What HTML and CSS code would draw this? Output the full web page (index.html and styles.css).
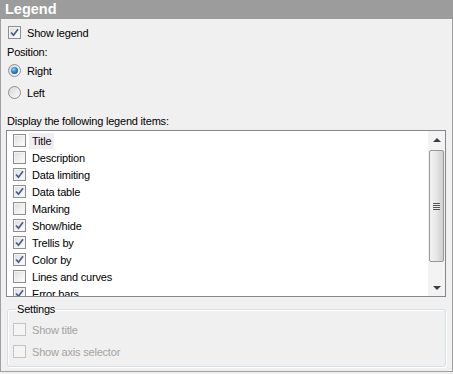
FILE: index.html
```html
<!DOCTYPE html>
<html lang="en">
  <head>
    <meta charset="UTF-8" />
    <title>Legend</title>
    <link rel="stylesheet" href="styles.css">
  </head>
  <body>
    <div class="panel">
      <div class="panel-header">Legend</div>
      <div class="panel-body">
        <label class="check-row first">
          <span class="box checked"><svg viewBox="0 0 11 11"><path d="M2 5.5 L4.5 8.2 L9 2.2" /></svg></span>
          Show legend
        </label>
        <div class="caption position">Position:</div>
        <label class="radio-row right">
          <span class="radio on"></span>
          Right
        </label>
        <label class="radio-row left">
          <span class="radio"></span>
          Left
        </label>
        <div class="caption items-caption">Display the following legend items:</div>

        <div class="listbox">
          <ul class="items">
            <li><span class="box"></span><span class="focus">Title</span></li>
            <li><span class="box"></span>Description</li>
            <li><span class="box checked"><svg viewBox="0 0 11 11"><path d="M2 5.5 L4.5 8.2 L9 2.2" /></svg></span>Data limiting</li>
            <li><span class="box checked"><svg viewBox="0 0 11 11"><path d="M2 5.5 L4.5 8.2 L9 2.2" /></svg></span>Data table</li>
            <li><span class="box"></span>Marking</li>
            <li><span class="box checked"><svg viewBox="0 0 11 11"><path d="M2 5.5 L4.5 8.2 L9 2.2" /></svg></span>Show/hide</li>
            <li><span class="box checked"><svg viewBox="0 0 11 11"><path d="M2 5.5 L4.5 8.2 L9 2.2" /></svg></span>Trellis by</li>
            <li><span class="box checked"><svg viewBox="0 0 11 11"><path d="M2 5.5 L4.5 8.2 L9 2.2" /></svg></span>Color by</li>
            <li><span class="box"></span>Lines and curves</li>
            <li><span class="box checked"><svg viewBox="0 0 11 11"><path d="M2 5.5 L4.5 8.2 L9 2.2" /></svg></span>Error bars</li>
          </ul>
          <div class="scrollbar">
            <div class="sb-button"><span class="arrow-up"></span></div>
            <div class="sb-track">
              <div class="sb-thumb">
                <span class="grip"></span>
              </div>
            </div>
            <div class="sb-button"><span class="arrow-down"></span></div>
          </div>
        </div>

        <fieldset class="settings">
          <legend>Settings</legend>
          <label class="check-row disabled">
            <span class="box"></span>
            Show title
          </label>
          <label class="check-row disabled">
            <span class="box"></span>
            Show axis selector
          </label>
        </fieldset>
      </div>
    </div>
  </body>
</html>
```

FILE: styles.css
```css
body {
  margin: 0;
  background-color: #f0f0f0;
  font-family: "Liberation Sans", Arial, sans-serif;
  font-size: 11px;
  letter-spacing: -0.2px;
  color: #000;
}

.panel {
  box-sizing: border-box;
  width: 453px;
  height: 372px;
  border: 1px solid #a0a0a0;
  border-top: none;
  background-color: #f0f0f0;
}

.panel-header {
  height: 19px;
  margin: 0 -1px;
  padding-left: 5px;
  background-color: #9c9c9c;
  color: #fff;
  font-size: 14.5px;
  font-weight: bold;
  line-height: 18px;
  letter-spacing: 0;
}

.panel-body {
  display: flex;
  flex-direction: column;
  padding: 5px 6px 0 5px;
}

/* checkbox + radio rows */
.check-row,
.radio-row {
  display: flex;
  align-items: center;
  height: 17px;
  margin-left: 2px;
}

.check-row .box,
.radio-row .radio {
  margin-right: 6px;
}

.caption {
  height: 16px;
  line-height: 16px;
  margin-left: 1px;
}

.position {
  margin-top: 3px;
}

.right {
  margin-top: 2px;
}

.left {
  margin-top: 5px;
}

.items-caption {
  margin-top: 12px;
}

.box {
  box-sizing: border-box;
  flex: none;
  display: inline-block;
  width: 13px;
  height: 13px;
  border: 1px solid #8e8f8f;
  background: linear-gradient(135deg, #dcdcdc 0%, #f0f0f0 55%, #fdfdfd 100%);
  box-shadow: inset 0 0 0 1px #f4f4f4;
}

.box svg {
  display: block;
  width: 11px;
  height: 11px;
}

.box path {
  fill: none;
  stroke: #4a5c8e;
  stroke-width: 1.7;
}

.radio {
  box-sizing: border-box;
  flex: none;
  display: inline-block;
  width: 13px;
  height: 13px;
  border: 1px solid #8e8f8f;
  border-radius: 50%;
  background: linear-gradient(135deg, #d8d8d8, #fafafa);
  position: relative;
}

.radio.on::after {
  content: "";
  position: absolute;
  left: 2px;
  top: 2px;
  width: 7px;
  height: 7px;
  border-radius: 50%;
  background: radial-gradient(circle at 40% 35%, #8fd0f5 0%, #2a86c8 45%, #0f3f75 100%);
}

/* list box */
.listbox {
  display: flex;
  height: 167px;
  margin-top: 1px;
  border: 1px solid #828790;
  background-color: #fff;
  box-sizing: border-box;
}

.items {
  flex: 1;
  list-style: none;
  margin: 0;
  padding: 1px 0 0 0;
  overflow: hidden;
}

.items li {
  display: flex;
  align-items: center;
  height: 17px;
  padding-left: 6px;
}

.items .box {
  margin-right: 6px;
}

.focus {
  margin-left: -3px;
  padding: 0 3px;
  height: 16px;
  line-height: 16px;
  background-color: #efefef;
  color: #200020;
}

.scrollbar {
  display: flex;
  flex-direction: column;
  width: 17px;
  background-color: #f3f3f3;
}

.sb-button {
  height: 17px;
  display: flex;
  align-items: center;
  justify-content: center;
}

.arrow-up {
  width: 0;
  height: 0;
  border-left: 4px solid transparent;
  border-right: 4px solid transparent;
  border-bottom: 4px solid #3e3e3e;
}

.arrow-down {
  width: 0;
  height: 0;
  border-left: 4px solid transparent;
  border-right: 4px solid transparent;
  border-top: 4px solid #3e3e3e;
}

.sb-track {
  flex: 1;
  padding-top: 2px;
}

.sb-thumb {
  box-sizing: border-box;
  height: 112px;
  margin: 0 1px;
  border: 1px solid #989898;
  border-radius: 2px;
  background: linear-gradient(to right, #f3f3f3 0%, #e6e6e6 50%, #cfcfcf 100%);
  display: flex;
  align-items: center;
  justify-content: center;
}

.grip {
  width: 7px;
  height: 7px;
  background: repeating-linear-gradient(to bottom, #555 0 1px, #e8e8e8 1px 2px);
}

/* settings group */
.settings {
  margin: 6px 0 0 1px;
  padding: 5px 0 0 5px;
  height: 64px;
  box-sizing: border-box;
  border: 1px solid #d5dfe5;
  border-radius: 3px;
  box-shadow: inset 1px 1px 0 #fff, 1px 1px 0 #fff;
}

.settings legend {
  padding: 0 1px;
  margin-left: 3px;
  line-height: 13px;
}

.settings .check-row {
  margin-left: 0;
}

.settings .check-row + .check-row {
  margin-top: 5px;
}

.disabled {
  color: #a3a3a3;
}

.disabled .box {
  border-color: #c3c3c3;
  background: #f4f4f4;
  box-shadow: none;
}
```
